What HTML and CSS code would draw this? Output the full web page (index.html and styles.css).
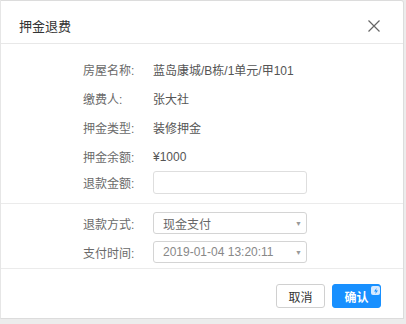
FILE: index.html
```html
<!DOCTYPE html>
<html lang="zh-CN">
<head>
    <meta charset="UTF-8">
    <title>押金退费</title>
    <link rel="stylesheet" href="styles.css">
</head>
<body>
    <div class="modal">
        <div class="modal-header">
            <span class="modal-title">押金退费</span>
            <svg class="close" width="12" height="12" viewBox="0 0 12 12">
                <path d="M0.5 0.5 L11.5 11.5 M11.5 0.5 L0.5 11.5" stroke="#666" stroke-width="1.2" fill="none"/>
            </svg>
        </div>

        <div class="section">
            <div class="row">
                <span class="label">房屋名称:</span>
                <span class="value">蓝岛康城/B栋/1单元/甲101</span>
            </div>
            <div class="row">
                <span class="label">缴费人:</span>
                <span class="value">张大社</span>
            </div>
            <div class="row">
                <span class="label">押金类型:</span>
                <span class="value">装修押金</span>
            </div>
            <div class="row">
                <span class="label">押金余额:</span>
                <span class="value">¥1000</span>
            </div>
            <div class="row row-input">
                <span class="label">退款金额:</span>
                <input class="input" type="text">
            </div>
        </div>

        <div class="section section-pay">
            <div class="row row-select">
                <span class="label">退款方式:</span>
                <div class="select">
                    <span>现金支付</span>
                    <span class="arrow">▼</span>
                </div>
            </div>
            <div class="row row-select">
                <span class="label">支付时间:</span>
                <div class="select select-muted">
                    <span>2019-01-04 13:20:11</span>
                    <span class="arrow">▼</span>
                </div>
            </div>
        </div>

        <div class="modal-footer">
            <button class="btn">取消</button>
            <button class="btn btn-primary">
                确认
                <span class="badge">
                    <svg width="6" height="6" viewBox="0 0 6 6">
                        <path d="M3.6 0 L1 3.4 L2.9 3.4 L2.3 6 L5 2.4 L3.1 2.4 Z" fill="#1890ff"/>
                    </svg>
                </span>
            </button>
        </div>
    </div>
</body>
</html>
```

FILE: styles.css
```css
* {
    margin: 0;
    padding: 0;
    box-sizing: border-box;
}

body {
    font-family: "Liberation Sans", "Noto Sans CJK SC", sans-serif;
    background: #ececec;
    width: 406px;
    height: 324px;
    overflow: hidden;
}

.modal {
    width: 404px;
    height: 319px;
    background: #fff;
    border: 1px solid #dcdcdc;
    border-left-color: #e6e6e6;
    border-radius: 0 3px 0 0;
}

.modal-header {
    height: 43px;
    padding: 7px 23px 0 18px;
    display: flex;
    align-items: center;
    justify-content: space-between;
    border-bottom: 1px solid #e8e8e8;
}

.modal-title {
    font-size: 13px;
    color: #333;
}

.section {
    padding: 11px 0 9px 82px;
    border-bottom: 1px solid #ebebeb;
}

.row {
    height: 29px;
    display: flex;
    align-items: center;
    font-size: 12px;
}

.label {
    width: 70px;
    color: #6a6a6a;
}

.value {
    color: #555;
}

.row-input {
    height: 23px;
}

.input {
    width: 154px;
    height: 23px;
    border: 1px solid #dedede;
    border-radius: 3px;
    background: #fff;
}

.section-pay {
    padding: 8px 0 5px 82px;
    display: flex;
    flex-direction: column;
    gap: 7px;
}

.row-select {
    height: 22px;
}

.select {
    width: 154px;
    height: 22px;
    border: 1px solid #d4d4d4;
    border-radius: 3px;
    padding: 0 4px 0 9px;
    display: flex;
    align-items: center;
    justify-content: space-between;
    color: #666;
}

.select-muted {
    color: #888;
}

.arrow {
    font-size: 7px;
    color: #999;
}

.modal-footer {
    display: flex;
    justify-content: flex-end;
    gap: 7px;
    padding: 15px 22px 0 0;
}

.btn {
    position: relative;
    width: 49px;
    height: 24px;
    border: 1px solid #d0d0d0;
    border-radius: 3px;
    background: #fff;
    color: #333;
    font-family: "Liberation Sans", "Noto Sans CJK SC", sans-serif;
    font-size: 12px;
}

.btn-primary {
    background: #1890ff;
    border-color: #1890ff;
    color: #fff;
    font-weight: bold;
}

.badge {
    position: absolute;
    top: 1px;
    right: 0;
    width: 9px;
    height: 9px;
    background: #d6e9ff;
    border-radius: 2px;
    display: flex;
    align-items: center;
    justify-content: center;
}
```
